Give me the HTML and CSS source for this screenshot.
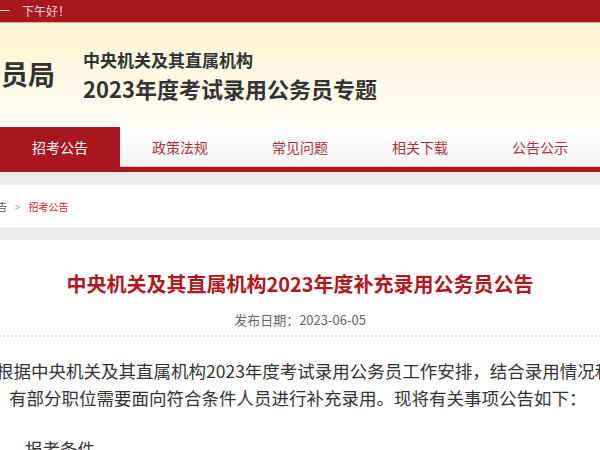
FILE: index.html
```html
<!DOCTYPE html>
<html lang="zh-CN">
  <head>
    <meta charset="UTF-8" />
    <meta name="viewport" content="width=device-width, initial-scale=1.0" />
    <title>中央机关及其直属机构2023年度考试录用公务员专题</title>
    <link rel="stylesheet" href="styles.css">
  </head>
  <body>
    <div class="topbar">
      <div class="wrap topbar-inner">
        <span class="today">2023年6月5日 星期一</span>
        <span class="greet">下午好！</span>
      </div>
    </div>

    <div class="header">
      <div class="wrap header-inner">
        <div class="logo">国家公务员局</div>
        <div class="site-title">
          <div class="sub">中央机关及其直属机构</div>
          <div class="main">2023年度考试录用公务员专题</div>
        </div>
      </div>
    </div>

    <div class="nav">
      <div class="wrap nav-inner">
        <a href="#">首页</a>
        <a href="#" class="active">招考公告</a>
        <a href="#">政策法规</a>
        <a href="#">常见问题</a>
        <a href="#">相关下载</a>
        <a href="#">公告公示</a>
      </div>
    </div>

    <div class="band"></div>
    <div class="crumbs">
      <div class="wrap crumbs-inner">
        <span class="crumb-home">首页 <i>&gt;</i> 考录公告</span>
        <i>&gt;</i>
        <a href="#">招考公告</a>
      </div>
    </div>
    <div class="band"></div>

    <div class="article">
      <div class="wrap">
        <h1>中央机关及其直属机构2023年度补充录用公务员公告</h1>
        <div class="date">发布日期：2023-06-05</div>
        <div class="rule"></div>
        <p class="lead">根据中央机关及其直属机构2023年度考试录用公务员工作安排，结合录用情况和职位空缺情况，<br>有部分职位需要面向符合条件人员进行补充录用。现将有关事项公告如下：</p>
        <h2>报考条件</h2>
      </div>
    </div>
  </body>
</html>
```

FILE: styles.css
```css
body {
  margin: 0;
  overflow: hidden;
  background: #fff;
  font-family: "Noto Sans CJK SC", "Liberation Sans", sans-serif;
  color: #333;
}
.wrap {
  width: 1000px;
  margin-left: -200px;
}
a {
  text-decoration: none;
}

/* top bar */
.topbar {
  background-color: #a8161e;
  height: 22px;
  border-bottom: 1px solid #e3a9a4;
}
.topbar-inner {
  display: flex;
  font-size: 12px;
  line-height: 22px;
  color: #f6d9d2;
}
.today {
  width: 210px;
  flex-shrink: 0;
  text-align: right;
  white-space: nowrap;
}
.greet {
  margin-left: 12px;
}

/* header */
.header {
  height: 104px;
  background: linear-gradient(#fdf4d2, #fffef6);
}
.header-inner {
  display: flex;
}
.logo {
  width: 255px;
  flex-shrink: 0;
  text-align: right;
  white-space: nowrap;
  font-size: 27px;
  font-weight: bold;
  line-height: 36px;
  padding-top: 33px;
  color: #333;
}
.site-title {
  margin-left: 28px;
  padding-top: 25px;
  font-weight: bold;
  color: #333;
}
.site-title .sub {
  font-size: 17px;
  line-height: 24px;
}
.site-title .main {
  font-size: 22px;
  line-height: 32px;
}

/* nav */
.nav {
  background: linear-gradient(#fff, #f3f3f3);
  border-bottom: 5px solid #a8161e;
  box-shadow: inset 0 -1px 0 #e7b9bc;
}
.nav-inner {
  display: flex;
  padding-left: 80px;
  box-sizing: border-box;
}
.nav a {
  width: 120px;
  height: 40px;
  line-height: 40px;
  text-align: center;
  font-size: 14px;
  color: #a8323c;
}
.nav a.active {
  background-color: #a8161e;
  color: #fff;
}

/* breadcrumbs */
.band {
  height: 13px;
  background-color: #ececec;
}
.crumbs {
  height: 42px;
}
.crumbs-inner {
  display: flex;
  align-items: center;
  height: 42px;
  font-size: 10px;
  color: #555;
}
.crumb-home {
  width: 207px;
  flex-shrink: 0;
  text-align: right;
  white-space: nowrap;
}
.crumbs i {
  font-style: normal;
  color: #999;
  margin: 0 8px;
}
.crumbs a {
  color: #d2232a;
}

/* article */
.article {
  padding-top: 29px;
}
.article h1 {
  margin: 0;
  text-align: center;
  font-size: 20px;
  line-height: 30px;
  color: #b01820;
}
.date {
  margin-top: 11px;
  text-align: center;
  font-size: 13px;
  line-height: 20px;
  color: #666;
}
.rule {
  margin-top: 5px;
  border-top: 2px dotted #e6e6e6;
}
.lead {
  margin: 20px 0 0 209px;
  text-indent: -13px;
  font-size: 17.5px;
  line-height: 27px;
  white-space: nowrap;
  color: #333;
}
.article h2 {
  margin: 24px 0 0 225px;
  font-size: 17.5px;
  font-weight: normal;
  line-height: 27px;
  color: #333;
}
```
